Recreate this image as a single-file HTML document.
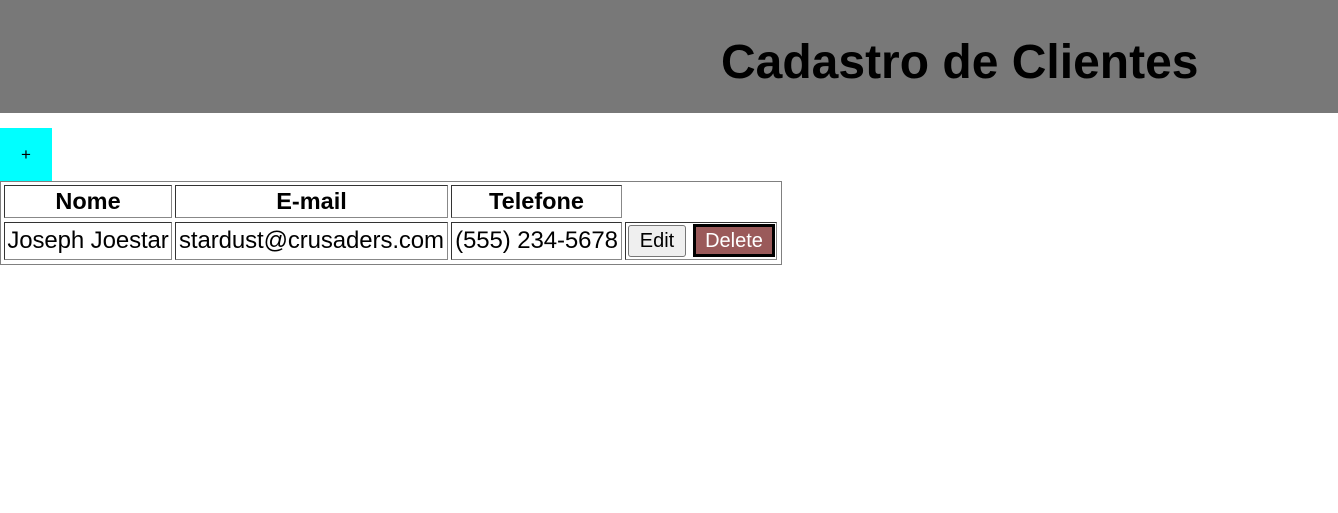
<!DOCTYPE html>
<html><head><style>
body{margin:0;width:1338px;height:513px;background:#fff;font-family:"Liberation Sans",Arial,sans-serif;position:relative;overflow:hidden}
.hdr{position:absolute;left:0;top:0;width:1338px;height:113px;background:#787878}
.hdr h1{position:absolute;left:721px;top:33px;margin:0;font-size:48px;line-height:60px;font-weight:bold;color:#000;white-space:nowrap}
.add{position:absolute;left:0;top:128px;width:52px;height:53px;background:#00ffff;font-size:17px;text-align:center;line-height:53px}
.tbl{position:absolute;left:0;top:181px;width:780px;height:82px;border:1px solid #808080}
.c{position:absolute;box-sizing:border-box;border:1px solid;border-color:#333 #888 #888 #333;font-size:24px;text-align:center;white-space:nowrap;color:#000}
.th{font-weight:bold;font-size:23.5px;line-height:31px}
.td{line-height:36px;letter-spacing:-0.1px}
.btn{position:absolute;box-sizing:border-box;font-size:20px;text-align:center}
</style></head><body>
<div class="hdr"><h1>Cadastro de Clientes</h1></div>
<div class="add">+</div>
<div class="tbl"></div>
<div class="c th" style="left:4px;top:185px;width:168px;height:33px">Nome</div>
<div class="c th" style="left:175px;top:185px;width:273px;height:33px">E-mail</div>
<div class="c th" style="left:451px;top:185px;width:171px;height:33px">Telefone</div>
<div class="c td" style="left:4px;top:222px;width:168px;height:38px">Joseph Joestar</div>
<div class="c td" style="left:175px;top:222px;width:273px;height:38px">stardust@crusaders.com</div>
<div class="c td" style="left:451px;top:222px;width:171px;height:38px">(555) 234-5678</div>
<div class="c" style="left:625px;top:222px;width:152px;height:38px"></div>
<div class="btn" style="left:628px;top:225px;width:58px;height:32px;background:#efefef;border:1px solid #767676;border-radius:3px;line-height:30px">Edit</div>
<div class="btn" style="left:693px;top:224px;width:82px;height:33px;background:#9a5a5a;border:3px solid #000;color:#fff;line-height:28px">Delete</div>
</body></html>
